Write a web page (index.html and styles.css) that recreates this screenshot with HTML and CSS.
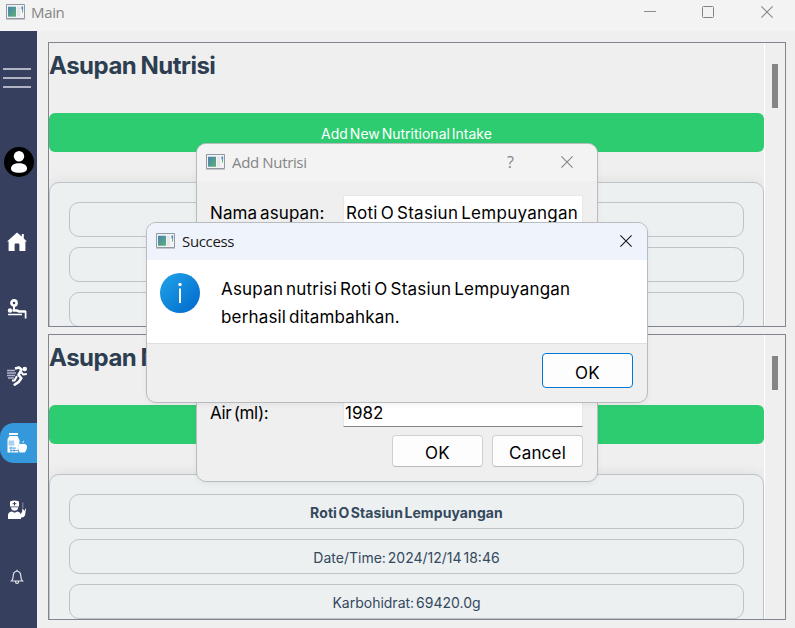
FILE: index.html
```html
<!DOCTYPE html>
<html lang="id">
<head>
<meta charset="utf-8">
<title>Main</title>
<link rel="stylesheet" href="styles.css">
</head>
<body>
<svg width="0" height="0" class="defs">
  <defs>
    <linearGradient id="appg" x1="0" y1="0" x2="1" y2="1"><stop offset="0" stop-color="#4a82b4"/><stop offset="1" stop-color="#5cb073"/></linearGradient>
    <linearGradient id="infog" x1="0" y1="0" x2="1" y2="1"><stop offset="0" stop-color="#20a5e8"/><stop offset="1" stop-color="#0067cc"/></linearGradient>
    <symbol id="app" viewBox="0 0 19 16">
      <path d="M.5.5h18v14H.5z" fill="#f1f3f6" stroke="#9297a2"/>
      <path d="M2 2.7h8v10H2z" fill="url(#appg)"/>
      <path d="M11 2.5h3v10h-3z" fill="#e4e6e8"/>
      <path d="M15.500 2.500h1.600v3.500l-1.600-.8z" fill="#4b83b8"/><path d="M16 6h1v2.500h-1z" fill="#63b276"/>
      <path d="M0 15.500h19" stroke="#c5c7cc"/>
    </symbol>
    <symbol id="close" viewBox="0 0 12 12"><path d="M.4.4l11.200 11.200M11.600.4L.4 11.600" fill="none" stroke="currentColor" stroke-width="1.100"/></symbol>
  </defs>
</svg>
<div class="window">
  <header class="titlebar">
    <svg class="app-icon"><use href="#app"/></svg>
    <span class="title main-title">Main</span>
    <div class="controls">
      <svg width="12" height="12"><path d="M0 5.500h12" stroke="#8c8c8c"/></svg>
      <svg width="12" height="12"><rect x=".5" y=".5" width="11" height="11" rx="1" fill="none" stroke="#858585"/></svg>
      <svg width="12" height="12"><use href="#close"/></svg>
    </div>
  </header>
  <div class="body">
    <nav class="sidebar">
      <div class="menu"><i></i><i></i><i></i></div>
      <svg class="avatar" viewBox="0 0 30 30"><circle cx="15" cy="15" r="15"/><circle cx="15" cy="9.300" r="5.200" fill="#fff"/><path d="M7 21.800c0-4 3.500-5.500 8-5.500s8 1.500 8 5.500c0 2.600-3.500 4-8 4s-8-1.400-8-4z" fill="#fff"/></svg>
      <div class="item"><svg viewBox="0 0 20 20" fill="#fff"><path d="M10 .5L0 9.500h1.600V19h6v-6.500q0-1 1-1h2.800q1 0 1 1V19h6V9.500H20l-3.200-3V2h-2v2.600z"/></svg></div>
      <div class="item"><svg viewBox="0 0 20 20" fill="none" stroke="#fff"><circle cx="7" cy="4" r="2.600" stroke-width="2.600"/><circle cx="3" cy="11.500" r="2.200" fill="#fff" stroke="none"/><path d="M5.500 11.500h4.500l2 1h6.800" stroke-width="2.600"/><path d="M1 15.500h14M18.600 12v7.500" stroke-width="1.700"/><path d="M7 7v4" stroke-width="2"/></svg></div>
      <div class="item"><svg viewBox="0 0 20 20" fill="none" stroke="#fff" stroke-linejoin="round"><circle cx="17.800" cy="3" r="2.200" fill="#fff" stroke="none"/><path d="M8 2.500l4-.9 2.500 2-3 5.200 2.800 3.500-2.500 3.500-5 3.400" stroke-width="2.600"/><path d="M14 5.500l2 3 3.800-.5M10 10l-2.500 4.500H5" stroke-width="2"/><path d="M0 4.500h8M0 7h9M0 9.500h8M1 12h6" stroke="#aeb4ca" stroke-width="1.300"/></svg></div>
      <div class="item active"><svg viewBox="0 0 20 20" fill="#fff"><path d="M2 0h9v2H2zM2.500 3h8l1.500 3v5q-2 2-.6 8.500H.5V6z"/><path d="M1.500 7.500h6v5h-6z" fill="#a8d2f0"/><path d="M7.500 6.500h5v3.500q0 2-2.500 3-2.500-1-2.500-3z"/><path d="M15 11q-3-1-3.800 2-.8 3 1.600 6.500h5q3-4 2-7-1.400-2.500-4.800-1.500zM15.300 10q0-2 2-2.500-.2 2-2 2.500z"/><path d="M2 15h7M3 17.500h8M4 13.500v6M7 15v4" stroke="#58a9e1" fill="none"/></svg></div>
      <div class="item"><svg viewBox="0 0 20 20" fill="#fff"><path d="M3 1.500Q7.500-.5 12 1.500v5H3zM4 7.200h7.200q-.2 3.500-3.600 3.500T4 7.200zM1 19v-4.500q1-3 4-3l2.500 1.300 2.800-1.300q2.500 0 3.500 2.500l1.400-2.500V8.700l2.800 2V8.800h1l-1 6.700q-1.300 2.500-4 2V19z"/><path d="M7.500 2v3.500M5.700 3.700h3.600" stroke="#363f5e"/><path d="M15.800 2.500v6" stroke="#8f95ad"/></svg></div>
      <div class="item"><svg viewBox="0 0 20 20" fill="none" stroke="#e6e7ed" stroke-width="1.200"><path d="M4.500 14q1.700-1.700 1.700-5 0-4.200 3.800-5 3.800.8 3.800 5 0 3.300 1.700 5zM10 2.800V4M8.500 14.500q0 2 1.500 2t1.500-2"/></svg></div>
    </nav>
    <main class="content">
      <section class="panel">
        <div class="viewport">
          <h1>Asupan Nutrisi</h1>
          <div class="add"><span>Add New Nutritional Intake</span></div>
          <div class="card"><div class="row"></div><div class="row"></div><div class="row"></div></div>
        </div>
        <div class="scroll"><div class="thumb"></div></div>
      </section>
      <section class="panel">
        <div class="viewport">
          <h1>Asupan Nutrisi</h1>
          <div class="add"></div>
          <div class="card">
            <div class="row name"><span>Roti O Stasiun Lempuyangan</span></div>
            <div class="row date"><span>Date/Time: 2024/12/14 18:46</span></div>
            <div class="row carb"><span>Karbohidrat: 69420.0g</span></div>
          </div>
        </div>
        <div class="scroll"><div class="thumb short"></div></div>
      </section>
    </main>
  </div>

  <div class="dialog form-dialog">
    <header class="dlg-title">
      <svg class="app-icon"><use href="#app"/></svg><span class="title form-title">Add Nutrisi</span>
      <span class="help">?</span><svg class="x" width="12" height="12"><use href="#close"/></svg>
    </header>
    <div class="form">
      <div class="field"><label class="l-name">Nama asupan:</label><div class="input"><span class="v-name">Roti O Stasiun Lempuyangan</span></div></div>
      <div class="field"><label class="l-water">Air (ml):</label><div class="input last"><span class="v-water">1982</span></div></div>
    </div>
    <div class="actions"><button><span class="ok">OK</span></button><button><span class="cancel">Cancel</span></button></div>
  </div>

  <div class="dialog success">
    <header class="dlg-title">
      <svg class="app-icon"><use href="#app"/></svg><span class="title success-title">Success</span>
      <svg class="x" width="12" height="12"><use href="#close"/></svg>
    </header>
    <div class="message">
      <svg class="info" viewBox="0 0 40 40"><circle cx="20" cy="20" r="20" fill="url(#infog)"/><circle cx="20" cy="11.500" r="1.700" fill="#fff"/><path d="M20 15.500V30" stroke="#fff" stroke-width="2"/></svg>
      <p><span class="m1">Asupan nutrisi Roti O Stasiun Lempuyangan</span><br><span class="m2">berhasil ditambahkan.</span></p>
    </div>
    <footer><button class="primary"><span class="ok">OK</span></button></footer>
  </div>
</div>
</body>
</html>
```
FILE: styles.css
```css
* { box-sizing: border-box; }
body { margin: 0; font-family: Inter, "Liberation Sans", sans-serif; overflow: hidden; }
.defs { position: absolute; }
svg { display: block; flex: none; }
span, label { white-space: nowrap; }
.window { position: relative; width: 795px; height: 628px; background: #efefef; display: flex; flex-direction: column; }
.titlebar { height: 31px; background: #f3f3f3; display: flex; align-items: flex-start; padding: 4px 22px 0 6px; color: #858585; }
.app-icon { width: 19px; height: 16px; }
.title { font-family: "Open Sans", "Noto Sans", sans-serif; font-size: 15px; line-height: 20px; margin-left: 7px; letter-spacing: -.35px; }
.main-title { margin: -2px 0 0 6px; }
.controls { display: flex; gap: 47px; margin: 2px 0 0 auto; color: #858585; }
.controls svg:first-child { margin-right: -1px; }
.body { flex: 1; display: flex; }
.sidebar { width: 37px; background: #363f5e; display: flex; flex-direction: column; }
.menu { margin: 37px 0 0 3px; width: 28px; height: 20px; display: flex; flex-direction: column; justify-content: space-between; }
.menu i { height: 2px; background: #b0b4c3; }
.avatar { width: 30px; height: 30px; margin: 59px 0 45px 4px; }
.item { height: 40px; margin-bottom: 27px; display: flex; align-items: center; padding-left: 7px; flex: none; }
.item svg { width: 20px; height: 20px; }
.item.active { background: #3498db; border-radius: 14px 0 0 14px; }
.content { flex: 1; padding: 11px 9px 8px 11px; display: grid; grid-template-rows: 285px 286px; gap: 7px; }
.panel { border: 1px solid #838391; display: flex; overflow: hidden; }
.viewport { flex: 1; height: 100%; overflow: hidden; }
h1 { margin: 0; height: 70px; padding-top: 8px; font-size: 24px; line-height: 30px; font-weight: 700; color: #2c3e50; white-space: nowrap; letter-spacing: -.5px; word-spacing: -1px; }
.add { height: 39px; background: #2ecc71; border-radius: 6px; color: #fff; font-size: 14px; display: flex; align-items: center; justify-content: center; padding-top: 2px; word-spacing: -2px; }
.card { margin-top: 30px; height: 300px; padding: 19px; border: 1px solid #bdc3c7; border-radius: 10px; background: #ecf0f1; display: flex; flex-direction: column; gap: 10px; box-shadow: 0 0 14px rgba(0,0,0,.08); }
.row { height: 35px; flex: none; border: 1px solid #bdc3c7; border-radius: 10px; display: flex; align-items: center; justify-content: center; color: #34495e; font-size: 14px; padding-top: 2px; word-spacing: -2px; }
.name { font-weight: 700; letter-spacing: .1px; }
.scroll { width: 21px; border-left: 1px solid #fff; padding: 21px 0 0 7px; }
.thumb { width: 6px; height: 44px; background: #858585; }
.thumb.short { height: 34px; }
.dialog { position: absolute; overflow: hidden; border: 1px solid #b9bcbe; border-radius: 10px; background: #efefef; display: flex; flex-direction: column; box-shadow: 0 2px 5px rgba(0,0,0,.05); }
.form-dialog { left: 196px; top: 143px; width: 402px; height: 339px; }
.dlg-title { height: 37px; flex: none; display: flex; align-items: flex-start; padding: 10px 24px 0 9px; background: #f3f3f3; color: #858585; }
.dlg-title .title { margin-top: -2px; }
.dlg-title .x { margin: 2px 0 0; }
.help { margin: -2px 47px 0 auto; font: 16px/20px "Open Sans", sans-serif; }
.form { margin: 14px 13px 8px; height: 232px; display: flex; flex-direction: column; justify-content: space-between; }
.field { height: 33px; display: flex; font-size: 17px; line-height: 33px; word-spacing: -2px; }
.field label { width: 133px; padding-top: 2px; letter-spacing: .1px; }
.field .l-water { padding-top: 3px; letter-spacing: -.35px; }
.input { width: 240px; height: 33px; background: #fff; border: 1px solid #e8e8e8; border-bottom-color: #858585; padding: 1px 0 0 2px; }
.v-name { letter-spacing: .27px; }
.input.last { line-height: 35px; padding-left: 1px; }
.actions { display: flex; justify-content: flex-end; gap: 9px; padding-right: 14px; }
button { width: 91px; height: 32px; border: 1px solid #d0d0d0; border-bottom-color: #bbb; border-radius: 4px; background: #fdfdfd; font: 17px/20px Inter, sans-serif; color: #000; padding: 4px 0 0; }
.ok { letter-spacing: .4px; }
.cancel { letter-spacing: .2px; }
.success { left: 146px; top: 222px; width: 502px; height: 181px; }
.success .dlg-title { background: #eff3fb; color: #191919; padding-right: 15px; }
.success .x { margin: 2px 0 0 auto; }
.message { height: 83px; background: #fff; display: flex; padding: 13px; }
.info { width: 40px; height: 40px; }
.message p { margin: 2px 0 0 21px; font-size: 17px; line-height: 28px; word-spacing: -2px; }
.m1 { letter-spacing: .2px; }
.m2 { letter-spacing: .17px; }
.success footer { flex: 1; border-top: 1px solid #dfdfdf; padding: 9px 14px; display: flex; justify-content: flex-end; }
.success .primary { height: 35px; border-color: #0078d4; }
```
